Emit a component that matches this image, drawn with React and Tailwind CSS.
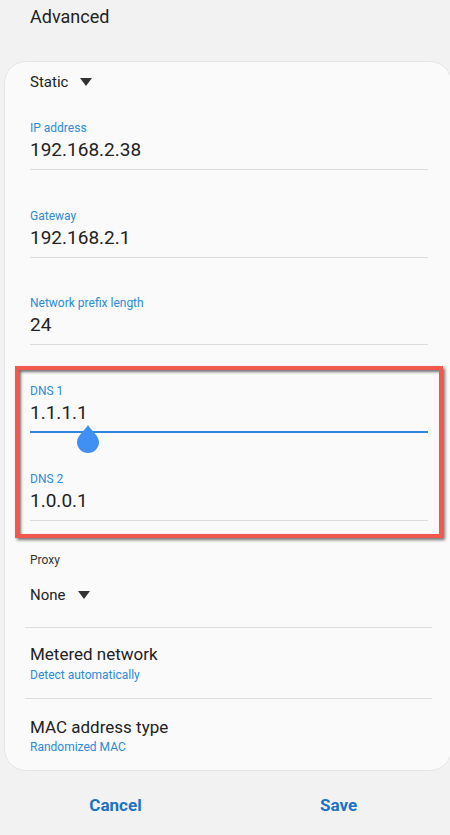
import React from "react";

const font = { fontFamily: "Roboto, 'Liberation Sans', sans-serif" };

function Tri() {
  return (
    <svg width="12" height="8" viewBox="0 0 12 8" className="ml-[12px]">
      <path d="M0 0 L12 0 L6 8 Z" fill="#333333" />
    </svg>
  );
}

function Field({ label, value, active, className = "", children }) {
  return (
    <div className={"relative flex flex-col " + className}>
      <div className="text-[12px] leading-[16px] text-[#2a8bd8]">{label}</div>
      <div className="mt-px text-[19px] leading-[26px] text-[#222222]">{value}</div>
      {active ? (
        <div className="mt-[5px] h-[2px] bg-[#2f86dd]" />
      ) : (
        <div className="mt-[6px] h-px bg-[#dcdcdc]" />
      )}
      {children}
    </div>
  );
}

export default function App() {
  return (
    <div className="min-h-[835px] w-[450px] overflow-hidden bg-[#f2f2f2]" style={font}>
      <div className="h-[61px] pl-[30px] pt-[5px] text-[18px] leading-[24px] text-[#222222]">
        Advanced
      </div>

      <div className="ml-[4px] w-[448px] rounded-[22px] border border-[#e6e6e6] bg-[#fafafa] pb-[15px]">
        <div className="pl-[25px] pr-[23px]">
          <div className="mt-[10px] flex h-[20px] items-center text-[15px] leading-[20px] text-[#222222]">
            Static
            <Tri />
          </div>

          <Field label="IP address" value="192.168.2.38" className="mt-[28px]" />
          <Field label="Gateway" value="192.168.2.1" className="mt-[38px]" />
          <Field label="Network prefix length" value="24" className="mt-[37px]" />

          <div className="-mx-[15px] mt-[21px] border-4 border-[#f2584b] px-[11px] pt-[13px] pb-[13px] shadow-[2px_2px_3px_rgba(0,0,0,0.55),inset_2px_2px_3px_rgba(0,0,0,0.55)]">
            <Field label="DNS 1" value="1.1.1.1" active>
              <svg
                width="22"
                height="28"
                viewBox="0 0 22 28"
                className="absolute left-[47px] top-[42px]"
              >
                <path d="M11 0 C8 5 0 11 0 17 A11 11 0 0 0 22 17 C22 11 14 5 11 0 Z" fill="#3f90f2" />
              </svg>
            </Field>
            <Field label="DNS 2" value="1.0.0.1" className="mt-[38px]" />
          </div>

          <div className="mt-[14px] text-[12px] leading-[16px] text-[#333333]">Proxy</div>
          <div className="mt-[17px] flex h-[20px] items-center text-[15px] leading-[20px] text-[#222222]">
            None
            <Tri />
          </div>
        </div>

        <div className="ml-[20px] mr-[19px] mt-[22px] h-px bg-[#dedede]" />

        <div className="pl-[25px] pr-[23px]">
          <div className="mt-[15px] text-[17px] leading-[22px] text-[#222222]">Metered network</div>
          <div className="mt-[2px] text-[12px] leading-[16px] text-[#2a8bd8]">Detect automatically</div>
        </div>

        <div className="ml-[20px] mr-[19px] mt-[15px] h-px bg-[#dedede]" />

        <div className="pl-[25px] pr-[23px]">
          <div className="mt-[17px] text-[17px] leading-[22px] text-[#222222]">MAC address type</div>
          <div className="mt-px text-[12px] leading-[16px] text-[#2a8bd8]">Randomized MAC</div>
        </div>
      </div>

      <div className="mt-[22px] flex pl-[4px]">
        <div className="flex-1 text-center text-[17px] font-bold leading-[24px] text-[#1b72c6]">Cancel</div>
        <div className="flex-1 text-center text-[17px] font-bold leading-[24px] text-[#1b72c6]">Save</div>
      </div>
    </div>
  );
}
